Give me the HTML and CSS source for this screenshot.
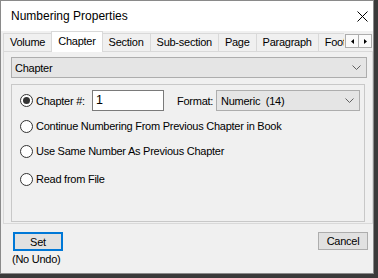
FILE: index.html
```html
<!DOCTYPE html>
<html>
<head>
<meta charset="utf-8">
<title>Numbering Properties</title>
<link rel="stylesheet" href="styles.css">
</head>
<body>
<div class="window">
  <div class="titlebar">
    <span class="title">Numbering Properties</span>
    <svg class="close" width="11" height="11" viewBox="0 0 11 11"><path d="M0.5 0.5 L10.5 10.5 M10.5 0.5 L0.5 10.5" stroke="#000" stroke-width="1" fill="none"/></svg>
  </div>
  <div class="tabrow">
    <div class="tabs">
      <div class="tab">Volume</div>
      <div class="tab active">Chapter</div>
      <div class="tab">Section</div>
      <div class="tab">Sub-section</div>
      <div class="tab">Page</div>
      <div class="tab">Paragraph</div>
      <div class="tab">Footnote</div>
    </div>
    <div class="scroller">
      <span class="sbtn"><svg width="3" height="5" viewBox="0 0 3 5"><path d="M3 0 L0 2.5 L3 5 Z" fill="#000"/></svg></span>
      <span class="sbtn"><svg width="3" height="5" viewBox="0 0 3 5"><path d="M0 0 L3 2.5 L0 5 Z" fill="#000"/></svg></span>
    </div>
  </div>
  <div class="page">
    <div class="combo wide">
      <span>Chapter</span>
      <svg class="chev" width="9" height="5" viewBox="0 0 9 5"><path d="M0.5 0.5 L4.5 4.5 L8.5 0.5" stroke="#606060" stroke-width="1" fill="none"/></svg>
    </div>
    <div class="group">
      <div class="row first">
        <span class="radio checked"></span>
        <span class="lbl">Chapter #:</span>
        <span class="input">1</span>
        <span class="fmt">Format:</span>
        <div class="combo fmtsel">
          <span>Numeric&nbsp; (14)</span>
          <svg class="chev" width="9" height="5" viewBox="0 0 9 5"><path d="M0.5 0.5 L4.5 4.5 L8.5 0.5" stroke="#606060" stroke-width="1" fill="none"/></svg>
        </div>
      </div>
      <div class="row r2"><span class="radio"></span><span class="opt">Continue Numbering From Previous Chapter in Book</span></div>
      <div class="row r3"><span class="radio"></span><span class="opt">Use Same Number As Previous Chapter</span></div>
      <div class="row r4"><span class="radio"></span><span class="opt">Read from File</span></div>
    </div>
  </div>
  <div class="footer">
    <div class="leftcol">
      <div class="btn default">Set</div>
      <div class="noundo">(No Undo)</div>
    </div>
    <div class="btn cancel">Cancel</div>
  </div>
</div>
</body>
</html>
```
FILE: styles.css
```css
html, body {
  margin: 0;
  padding: 0;
  background: #3a3a3a;
}
.window {
  width: 374px;
  height: 274px;
  box-sizing: border-box;
  border: 1px solid #8a8a8a;
  background: #f0f0f0;
  font-family: "Liberation Sans", Arial, sans-serif;
  font-size: 11px;
  letter-spacing: -0.25px;
  color: #000;
  display: flex;
  flex-direction: column;
}
.titlebar {
  height: 30px;
  flex: none;
  background: #fff;
  display: flex;
  align-items: center;
  justify-content: space-between;
  padding: 0 5px 0 10px;
}
.title {
  font-size: 12px;
  letter-spacing: 0;
}
.close {
  display: block;
}
.tabrow {
  height: 21px;
  flex: none;
  display: flex;
  align-items: flex-end;
  margin-left: 2px;
  background: linear-gradient(to top, #d9d9d9 1px, transparent 1px);
}
.tabs {
  width: 341px;
  height: 21px;
  display: flex;
  align-items: flex-end;
  overflow: hidden;
}
.tab {
  flex: none;
  box-sizing: border-box;
  height: 19px;
  line-height: 17px;
  padding: 0 6px;
  border: 1px solid #d9d9d9;
  margin-right: -1px;
  background: #f0f0f0;
  white-space: nowrap;
}
.tab.active {
  height: 21px;
  line-height: 18px;
  border-bottom: none;
  background: #fff;
  position: relative;
  z-index: 1;
}
.scroller {
  display: flex;
  align-self: flex-start;
  margin: 3px 0 0 2px;
}
.sbtn {
  width: 14px;
  height: 14px;
  box-sizing: border-box;
  border: 1px solid #adadad;
  margin-left: -1px;
  background: #fafafa;
  display: flex;
  align-items: center;
  justify-content: center;
}
.page {
  width: 370px;
  margin-left: 2px;
  box-sizing: border-box;
  border: 1px solid #d9d9d9;
  border-top: none;
  padding: 5px 5px 1px 7px;
}
.combo {
  box-sizing: border-box;
  border: 1px solid #adadad;
  background: #e5e5e5;
  height: 21px;
  display: flex;
  align-items: center;
  justify-content: space-between;
  padding: 0 5px 0 3px;
}
.combo.wide {
  width: 356px;
}
.group {
  width: 354px;
  height: 138px;
  margin-top: 6px;
  box-sizing: border-box;
  border: 1px solid #c8c8c8;
  padding: 5px 0 0 8px;
}
.row {
  display: flex;
  align-items: center;
  height: 16px;
}
.row.first { height: 21px; }
.row.r2 { margin-top: 7px; }
.row.r3 { margin-top: 9px; }
.row.r4 { margin-top: 12px; }
.radio {
  flex: none;
  width: 13px;
  height: 13px;
  box-sizing: border-box;
  border: 1px solid #333;
  border-radius: 50%;
  background: #fff;
  margin-right: 3px;
  display: flex;
  align-items: center;
  justify-content: center;
}
.radio.checked::after {
  content: "";
  width: 7px;
  height: 7px;
  border-radius: 50%;
  background: #333;
}
.lbl {
  width: 56px;
}
.input {
  box-sizing: border-box;
  width: 72px;
  height: 21px;
  border: 1px solid #7a7a7a;
  background: #fff;
  padding-left: 3px;
  line-height: 18px;
  font-size: 12.5px;
}
.fmt {
  width: 39px;
  margin-left: 13px;
}
.combo.fmtsel {
  width: 144px;
  padding-left: 4px;
}
.footer {
  display: flex;
  justify-content: space-between;
  align-items: flex-start;
  padding: 8px 5px 0 11px;
}
.btn {
  box-sizing: border-box;
  width: 50px;
  height: 18px;
  border: 1px solid #adadad;
  background: #e1e1e1;
  display: flex;
  align-items: center;
  justify-content: center;
}
.btn.default {
  height: 19px;
  margin-left: 1px;
  border: 2px solid #0078d7;
}
.noundo {
  margin-top: 1px;
  line-height: 14px;
}
```
